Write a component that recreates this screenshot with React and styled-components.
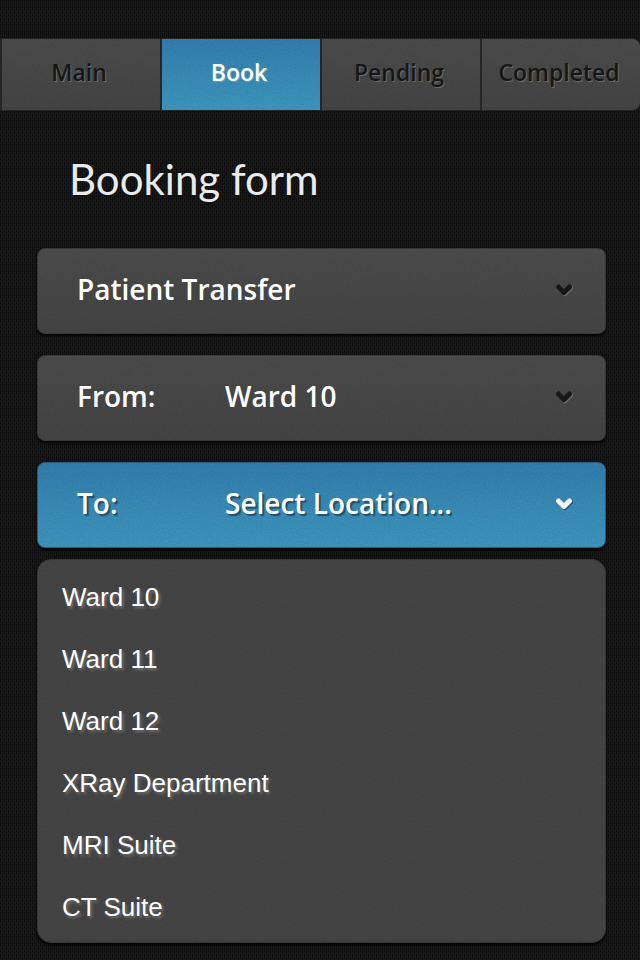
import React, { useState } from "react";
import styled, { createGlobalStyle, css } from "styled-components";

const weave = `url("data:image/svg+xml,${encodeURIComponent(
  "<svg xmlns='http://www.w3.org/2000/svg' width='4' height='6' shape-rendering='crispEdges'><rect width='4' height='6' fill='#191919'/><rect x='0' y='0' width='1' height='5' fill='#0c0c0c'/><rect x='2' y='3' width='1' height='3' fill='#0c0c0c'/><rect x='2' y='0' width='1' height='2' fill='#0c0c0c'/></svg>"
)}")`;

const grain = `url("data:image/svg+xml,${encodeURIComponent(
  "<svg xmlns='http://www.w3.org/2000/svg' width='128' height='128'><filter id='n' x='0' y='0' width='100%' height='100%'><feTurbulence type='fractalNoise' baseFrequency='0.8' numOctaves='2' stitchTiles='stitch'/><feColorMatrix values='0 0 0 0 0  0 0 0 0 0  0 0 0 0 0  0.16 0 0 0 -0.04'/></filter><rect width='128' height='128' filter='url(#n)'/></svg>"
)}")`;

const GlobalStyle = createGlobalStyle`
  *, *::before, *::after { box-sizing: border-box; }
  body {
    margin: 0;
    background: #141414 ${weave};
    color: #fff;
    font-family: "Open Sans", "Noto Sans", sans-serif;
  }
`;

const graySurface = css`
  background: ${grain}, linear-gradient(#4c4c4c, #444444);
`;
const blueSurface = css`
  background: ${grain}, linear-gradient(#337fb1, #3d98bf);
`;

const Page = styled.div`
  min-height: 100vh;
  padding-top: 38px;
`;

const TabBar = styled.nav`
  display: grid;
  grid-template-columns: repeat(4, 1fr);
  height: 73px;
  border: 1px solid #242424;
  border-width: 1px 0;
  border-radius: 0 8px 8px 0;
  overflow: hidden;
`;

const Tab = styled.button`
  padding: 0 4px 5px 0;
  border: 0;
  border-left: 2px solid #262626;
  font: 600 23px/32px "Open Sans", sans-serif;
  cursor: pointer;
  ${(p) => (p.$active ? blueSurface : graySurface)}
  color: ${(p) => (p.$active ? "#fff" : "#161616")};
  text-shadow: 1px 1px 0 ${(p) => (p.$active ? "#6f9fba" : "#6a6a6a")};
`;

const Form = styled.form`
  display: flex;
  flex-direction: column;
  padding: 36px 34px 16px 37px;
`;

const Title = styled.h1`
  margin: 0 0 37px 32px;
  font: 400 42px/64px Lato, "Open Sans", sans-serif;
  color: #e9ebec;
`;

const Field = styled.div`
  position: relative;
  display: flex;
  align-items: center;
  height: 86px;
  margin-bottom: ${(p) => (p.$open ? 11 : 21)}px;
  padding-left: 39px;
  border-radius: 8px;
  border: 1px solid ${(p) => (p.$open ? "#2a5b78" : "#383838")};
  box-shadow: 0 2px 2px #050505;
  font-size: 28px;
  line-height: 40px;
  font-weight: 600;
  ${(p) => (p.$open ? blueSurface : graySurface)}
  text-shadow: ${(p) => (p.$open ? "2px 2px 1px #234f69" : "none")};
`;

const FieldLabel = styled.label`
  width: 148px;
  padding-bottom: 4px;
`;

const Select = styled.select`
  flex: 1;
  min-width: 0;
  height: 100%;
  padding: 0 60px 4px 0;
  border: 0;
  outline: 0;
  appearance: none;
  background: transparent;
  color: inherit;
  font: inherit;
  text-shadow: inherit;
  cursor: pointer;

  option { background: #444; color: #fff; }
`;

const ChevronIcon = styled.svg`
  position: absolute;
  right: 30px;
  top: 30px;
  width: 22px;
  height: 20px;
  pointer-events: none;
  fill: none;
  stroke-width: 5;
  stroke-linecap: round;
  stroke-linejoin: round;
`;

const Options = styled.ul`
  margin: 0;
  padding: 6px 0 4px;
  list-style: none;
  border: 1px solid #383838;
  border-radius: 14px;
  box-shadow: 0 2px 2px #050505;
  background: ${grain}, #454545;
`;

const Option = styled.button`
  display: block;
  width: 100%;
  padding: 15px 24px;
  border: 0;
  background: transparent;
  color: #fff;
  font: 400 26px/32px "Liberation Sans", Arial, sans-serif;
  text-align: left;
  text-shadow: 2px 2px 3px #707070;
  cursor: pointer;
`;

function Chevron({ light }) {
  return (
    <ChevronIcon viewBox="0 0 22 20" aria-hidden="true">
      <path d="M5.5 8 11 13.5 16.5 8" transform="translate(1 1)" stroke={light ? "#234f69" : "#6c6c6c"} />
      <path d="M5.5 8 11 13.5 16.5 8" stroke={light ? "#eef2f4" : "#171717"} />
    </ChevronIcon>
  );
}

const tabs = ["Main", "Book", "Pending", "Completed"];
const locations = ["Ward 10", "Ward 11", "Ward 12", "XRay Department", "MRI Suite", "CT Suite"];

export default function App() {
  const [tab, setTab] = useState("Book");
  const [from, setFrom] = useState("Ward 10");
  const [to, setTo] = useState("");

  return (
    <Page>
      <GlobalStyle />
      <TabBar aria-label="Sections">
        {tabs.map((name) => (
          <Tab
            key={name}
            type="button"
            $active={name === tab}
            aria-current={name === tab ? "page" : undefined}
            onClick={() => setTab(name)}
          >
            {name}
          </Tab>
        ))}
      </TabBar>
      <Form>
        <Title>Booking form</Title>
        <Field>
          <Select aria-label="Booking type">
            <option>Patient Transfer</option>
          </Select>
          <Chevron />
        </Field>
        <Field>
          <FieldLabel htmlFor="from">From:</FieldLabel>
          <Select id="from" value={from} onChange={(e) => setFrom(e.target.value)}>
            {locations.map((l) => <option key={l}>{l}</option>)}
          </Select>
          <Chevron />
        </Field>
        <Field $open>
          <FieldLabel htmlFor="to">To:</FieldLabel>
          <Select id="to" value={to} onChange={(e) => setTo(e.target.value)}>
            <option value="">Select Location...</option>
            {locations.map((l) => <option key={l}>{l}</option>)}
          </Select>
          <Chevron light />
        </Field>
        <Options aria-label="Locations">
          {locations.map((l) => (
            <li key={l}>
              <Option type="button" onClick={() => setTo(l)}>{l}</Option>
            </li>
          ))}
        </Options>
      </Form>
    </Page>
  );
}
